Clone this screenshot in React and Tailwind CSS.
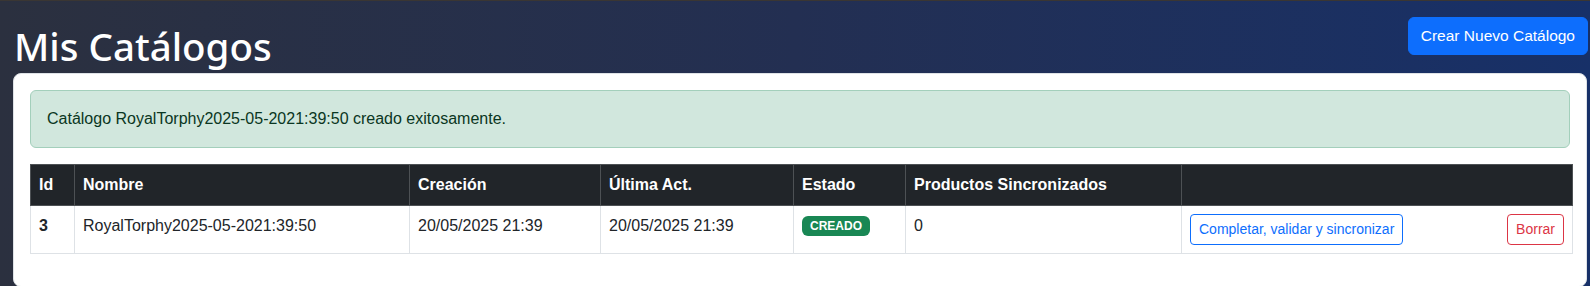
import React from 'react';

const columns = [
  { name: 'Id', width: 'w-[44px]' },
  { name: 'Nombre', width: 'w-[335px]' },
  { name: 'Creación', width: 'w-[191px]' },
  { name: 'Última Act.', width: 'w-[193px]' },
  { name: 'Estado', width: 'w-[112px]' },
  { name: 'Productos Sincronizados', width: 'w-[276px]' },
  { name: '', width: 'w-[391px]' },
];

const catalogos = [
  {
    id: 3,
    nombre: 'RoyalTorphy2025-05-2021:39:50',
    creacion: '20/05/2025 21:39',
    actualizacion: '20/05/2025 21:39',
    estado: 'CREADO',
    productos: 0,
  },
];

const App = () => {
  return (
    <div className="h-[286px] overflow-hidden border-t border-[#3a3633] bg-gradient-to-r from-[#2b303f] via-[#232f52] to-[#173068] font-['Liberation_Sans',Arial,sans-serif] text-base text-[#212529]">
      <div className="flex h-[72px] items-start justify-between pl-[14px] pr-[2px]">
        <h1 className="mt-[21px] font-['Noto_Sans',sans-serif] text-[38.5px] font-medium leading-[48px] text-white">
          Mis Catálogos
        </h1>
        <button className="mt-[16px] rounded-md border border-[#0d6efd] bg-[#0d6efd] px-3 py-1.5 text-[15.5px] leading-6 text-white">
          Crear Nuevo Catálogo
        </button>
      </div>

      <div className="ml-[13px] mr-[3px] rounded-lg border border-[#dee2e6] bg-white p-4">
        <div className="mb-4 rounded-md border border-[#a3cfbb] bg-[#d1e7dd] p-4 leading-6 text-[#0a3622]">
          Catálogo RoyalTorphy2025-05-2021:39:50 creado exitosamente.
        </div>

        <table className="mb-4 w-[1542px] table-fixed border-collapse">
          <thead>
            <tr className="bg-[#212529] text-white">
              {columns.map((col, i) => (
                <th
                  key={i}
                  className={`${col.width} border border-[#4d5154] px-2 py-2 text-left font-bold leading-6`}
                >
                  {col.name}
                </th>
              ))}
            </tr>
          </thead>
          <tbody>
            {catalogos.map((c) => (
              <tr key={c.id}>
                <td className="border border-[#dee2e6] p-2 align-top font-bold leading-6">{c.id}</td>
                <td className="border border-[#dee2e6] p-2 align-top leading-6">{c.nombre}</td>
                <td className="border border-[#dee2e6] p-2 align-top leading-6">{c.creacion}</td>
                <td className="border border-[#dee2e6] p-2 align-top leading-6">{c.actualizacion}</td>
                <td className="border border-[#dee2e6] p-2 align-top leading-6">
                  <span className="inline-block rounded-md bg-[#198754] px-[8px] py-[4px] align-[1px] text-xs leading-none font-bold text-white">
                    {c.estado}
                  </span>
                </td>
                <td className="border border-[#dee2e6] p-2 align-top leading-6">{c.productos}</td>
                <td className="border border-[#dee2e6] p-2 align-top">
                  <div className="flex items-start justify-between">
                    <button className="rounded border border-[#0d6efd] bg-white px-2 py-1 text-sm leading-[21px] text-[#0d6efd]">
                      Completar, validar y sincronizar
                    </button>
                    <button className="rounded border border-[#dc3545] bg-white px-2 py-1 text-sm leading-[21px] text-[#dc3545]">
                      Borrar
                    </button>
                  </div>
                </td>
              </tr>
            ))}
          </tbody>
        </table>
      </div>
    </div>
  );
};

export default App;
